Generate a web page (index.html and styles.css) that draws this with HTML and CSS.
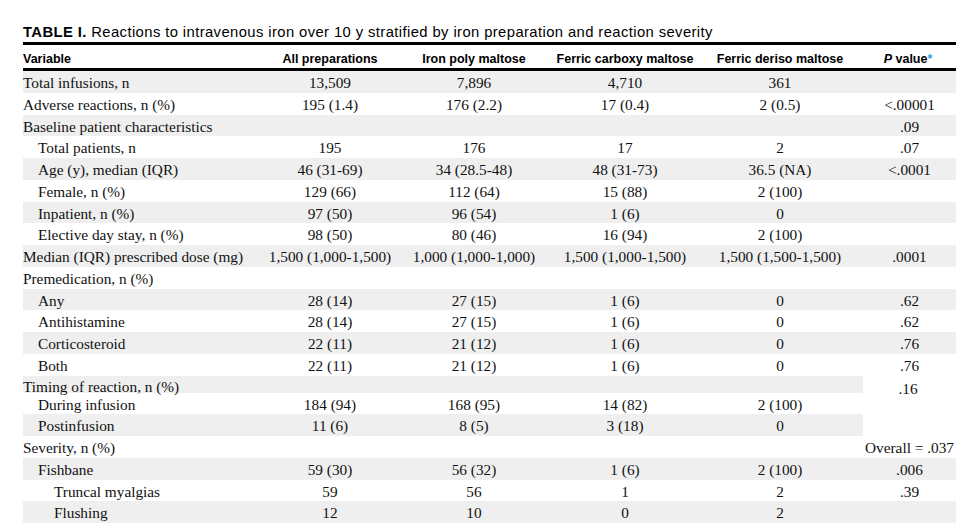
FILE: index.html
```html
<!DOCTYPE html>
<html lang="en">
<head>
<meta charset="utf-8">
<title>Table I</title>
<link rel="stylesheet" href="styles.css">
</head>
<body>
<div class="page">
  <p class="caption"><b>TABLE I.</b> Reactions to intravenous iron over 10 y stratified by iron preparation and reaction severity</p>
  <table class="data">
    <colgroup>
      <col class="c-var"><col class="c-all"><col class="c-ipm"><col class="c-fcm"><col class="c-fdm"><col class="c-p">
    </colgroup>
    <thead>
      <tr>
        <th class="left">Variable</th>
        <th>All preparations</th>
        <th>Iron poly maltose</th>
        <th>Ferric carboxy maltose</th>
        <th>Ferric deriso maltose</th>
        <th class="pcol"><i>P</i> value<span class="star">*</span></th>
      </tr>
    </thead>
    <tbody>
      <tr class="sh"><td class="lbl">Total infusions, n</td><td>13,509</td><td>7,896</td><td>4,710</td><td>361</td><td></td></tr>
      <tr><td class="lbl">Adverse reactions, n (%)</td><td>195 (1.4)</td><td>176 (2.2)</td><td>17 (0.4)</td><td>2 (0.5)</td><td>&lt;.00001</td></tr>
      <tr class="sh"><td class="lbl">Baseline patient characteristics</td><td></td><td></td><td></td><td></td><td>.09</td></tr>
      <tr><td class="lbl i1">Total patients, n</td><td>195</td><td>176</td><td>17</td><td>2</td><td>.07</td></tr>
      <tr class="sh"><td class="lbl i1">Age (y), median (IQR)</td><td>46 (31-69)</td><td>34 (28.5-48)</td><td>48 (31-73)</td><td>36.5 (NA)</td><td>&lt;.0001</td></tr>
      <tr><td class="lbl i1">Female, n (%)</td><td>129 (66)</td><td>112 (64)</td><td>15 (88)</td><td>2 (100)</td><td></td></tr>
      <tr class="sh"><td class="lbl i1">Inpatient, n (%)</td><td>97 (50)</td><td>96 (54)</td><td>1 (6)</td><td>0</td><td></td></tr>
      <tr><td class="lbl i1">Elective day stay, n (%)</td><td>98 (50)</td><td>80 (46)</td><td>16 (94)</td><td>2 (100)</td><td></td></tr>
      <tr class="sh"><td class="lbl">Median (IQR) prescribed dose (mg)</td><td>1,500 (1,000-1,500)</td><td>1,000 (1,000-1,000)</td><td>1,500 (1,000-1,500)</td><td>1,500 (1,500-1,500)</td><td>.0001</td></tr>
      <tr><td class="lbl">Premedication, n (%)</td><td></td><td></td><td></td><td></td><td></td></tr>
      <tr class="sh"><td class="lbl i1">Any</td><td>28 (14)</td><td>27 (15)</td><td>1 (6)</td><td>0</td><td>.62</td></tr>
      <tr><td class="lbl i1">Antihistamine</td><td>28 (14)</td><td>27 (15)</td><td>1 (6)</td><td>0</td><td>.62</td></tr>
      <tr class="sh"><td class="lbl i1">Corticosteroid</td><td>22 (11)</td><td>21 (12)</td><td>1 (6)</td><td>0</td><td>.76</td></tr>
      <tr><td class="lbl i1">Both</td><td>22 (11)</td><td>21 (12)</td><td>1 (6)</td><td>0</td><td>.76</td></tr>
      <tr class="sh short"><td class="lbl"><div class="squeeze">Timing of reaction, n (%)</div></td><td></td><td></td><td></td><td></td><td class="span" rowspan="3">.16</td></tr>
      <tr><td class="lbl i1">During infusion</td><td>184 (94)</td><td>168 (95)</td><td>14 (82)</td><td>2 (100)</td></tr>
      <tr class="sh"><td class="lbl i1">Postinfusion</td><td>11 (6)</td><td>8 (5)</td><td>3 (18)</td><td>0</td></tr>
      <tr><td class="lbl">Severity, n (%)</td><td></td><td></td><td></td><td></td><td class="nowrap">Overall = .037</td></tr>
      <tr class="sh"><td class="lbl i1">Fishbane</td><td>59 (30)</td><td>56 (32)</td><td>1 (6)</td><td>2 (100)</td><td>.006</td></tr>
      <tr><td class="lbl i2">Truncal myalgias</td><td>59</td><td>56</td><td>1</td><td>2</td><td>.39</td></tr>
      <tr class="sh"><td class="lbl i2">Flushing</td><td>12</td><td>10</td><td>0</td><td>2</td><td></td></tr>
    </tbody>
  </table>
</div>
</body>
</html>
```
FILE: styles.css
```css
html, body {
  margin: 0;
  padding: 0;
  background: #ffffff;
}

.page {
  padding: 23.5px 0 0 23px;
  width: 933px;
}

.caption {
  margin: 0 0 1.5px 0;
  font-family: "Liberation Sans", Arial, sans-serif;
  font-size: 14.8px;
  letter-spacing: 0.4px;
  line-height: 17px;
  color: #000;
  white-space: nowrap;
}

.caption b {
  font-weight: bold;
}

.data {
  width: 933px;
  table-layout: fixed;
  border-collapse: separate;
  border-spacing: 0;
}

.c-var { width: 242px; }
.c-all { width: 130px; }
.c-ipm { width: 158px; }
.c-fcm { width: 144px; }
.c-fdm { width: 166px; }
.c-p   { width: 93px; }

.data th {
  font-family: "Liberation Sans", Arial, sans-serif;
  font-weight: bold;
  font-size: 12.5px;
  line-height: 14px;
  color: #000;
  text-align: center;
  padding: 6.5px 0 2.5px 0;
  border-top: 3px solid #000;
  border-bottom: 3px solid #000;
  white-space: nowrap;
}

.data th.left {
  text-align: left;
}

.data th.pcol {
  padding-right: 3px;
}

.star {
  color: #2aa3d9;
}

.data td {
  font-family: "Liberation Serif", "Times New Roman", serif;
  font-size: 15.3px;
  line-height: 17px;
  color: #111;
  text-align: center;
  padding: 3px 0 1.75px 0;
  height: 17px;
  white-space: nowrap;
}

.data td.lbl {
  text-align: left;
}

.data td.i1 { padding-left: 15px; }
.data td.i2 { padding-left: 31px; }

.data tr.sh td {
  background: #efefef;
}

.data tr.short td {
  padding: 0;
  height: 17px;
}

.squeeze {
  height: 17px;
  line-height: 22px;
  overflow: visible;
}

.data tr.sh td.span,
.data td.span {
  background: #ffffff;
  vertical-align: top;
  padding: 4px 3px 0 0;
}

.data td.nowrap {
  white-space: nowrap;
}
```
